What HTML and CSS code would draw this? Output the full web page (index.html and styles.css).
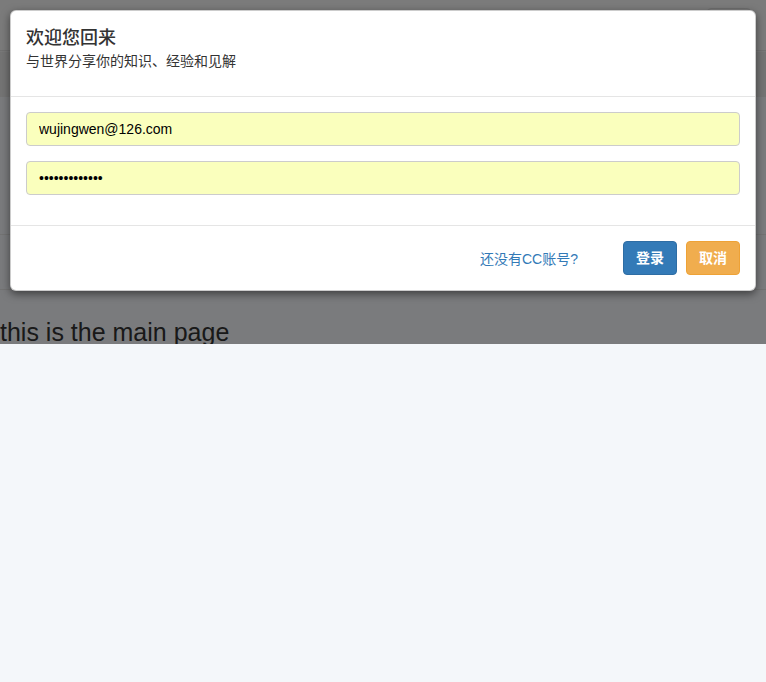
FILE: index.html
```html
<!DOCTYPE html>
<html lang="zh-CN">
<head>
<meta charset="utf-8">
<title>欢迎您回来</title>
<link rel="stylesheet" href="styles.css">
</head>
<body>
<div class="page">
  <nav class="navbar">
    <span class="navbar-toggle"></span>
  </nav>
  <div class="subbar"></div>
  <div class="spacer"></div>
  <div class="band"></div>
  <h2 class="main-title">this is the main page</h2>

  <div class="backdrop"></div>

  <div class="modal">
    <div class="modal-header">
      <h4 class="modal-title">欢迎您回来</h4>
      <p class="modal-sub">与世界分享你的知识、经验和见解</p>
    </div>
    <div class="modal-body">
      <div class="form-group"><input class="form-control" type="text" value="wujingwen@126.com"></div>
      <div class="form-group"><input class="form-control" type="password" value="1234567890123"></div>
    </div>
    <div class="modal-footer">
      <a class="signup-link" href="#">还没有CC账号?</a>
      <button class="btn btn-primary" type="button">登录</button>
      <button class="btn btn-warning" type="button">取消</button>
    </div>
  </div>
</div>
</body>
</html>
```

FILE: styles.css
```css
* { box-sizing: border-box; }
html, body {
  margin: 0;
  padding: 0;
  background: #f4f7fa;
  font-family: "Liberation Sans", "Noto Sans CJK SC", Arial, sans-serif;
  font-size: 14px;
  color: #333;
}
.page {
  position: relative;
  height: 344px;
  overflow: hidden;
  background: #f4f7fa;
}
.navbar {
  height: 51px;
  background: #f6f6f6;
  border-bottom: 1px solid #e2e2e2;
  display: flex;
  justify-content: flex-end;
  padding: 8px 15px 0 0;
}
.navbar-toggle {
  width: 44px;
  height: 34px;
  border: 1px solid #ddd;
  border-radius: 4px;
}
.subbar {
  height: 46px;
  background: #e9e9e9;
  border-top: 1px solid #f2f2f2;
}
.spacer {
  height: 137px;
}
.band {
  height: 56px;
  border-top: 1px solid #e6e6e6;
  border-bottom: 1px solid #e6e6e6;
}
.main-title {
  margin: 0;
  padding-top: 29px;
  font-size: 25px;
  font-weight: normal;
  line-height: 1.1;
  color: #333;
}
.backdrop {
  position: absolute;
  inset: 0;
  background: rgba(0, 0, 0, 0.5);
}
.modal {
  position: absolute;
  top: 10px;
  left: 10px;
  right: 10px;
  background: #fff;
  border: 1px solid rgba(0, 0, 0, 0.2);
  border-radius: 6px;
  box-shadow: 0 3px 9px rgba(0, 0, 0, 0.5);
  font-family: "Liberation Sans", "Noto Sans CJK SC", sans-serif;
}
.modal-header {
  padding: 15px;
  border-bottom: 1px solid #e5e5e5;
}
.modal-title {
  margin: 0;
  font-size: 18px;
  font-weight: 500;
  line-height: 25px;
  color: #333;
}
.modal-sub {
  margin: 0 0 10px;
  font-size: 14px;
  line-height: 20px;
  color: #333;
}
.modal-body {
  padding: 15px;
}
.form-group {
  margin-bottom: 15px;
}
.form-control {
  display: block;
  width: 100%;
  height: 34px;
  padding: 6px 12px;
  font-family: "Liberation Sans", sans-serif;
  font-size: 14px;
  color: #000;
  background: #faffbd;
  border: 1px solid #ccc;
  border-radius: 4px;
  outline: none;
}
.modal-footer {
  padding: 15px;
  border-top: 1px solid #e5e5e5;
  display: flex;
  justify-content: flex-end;
  align-items: center;
}
.signup-link {
  color: #337ab7;
  text-decoration: none;
  font-size: 14px;
  margin-right: 45px;
}
.btn {
  height: 34px;
  padding: 6px 12px;
  font-family: "Liberation Sans", "Noto Sans CJK SC", sans-serif;
  font-size: 14px;
  font-weight: 700;
  line-height: 20px;
  border: 1px solid transparent;
  border-radius: 4px;
  color: #fff;
  width: 54px;
}
.btn + .btn {
  margin-left: 9px;
}
.btn-primary {
  background: #337ab7;
  border-color: #2e6da4;
}
.btn-warning {
  background: #f0ad4e;
  border-color: #eea236;
}
```
